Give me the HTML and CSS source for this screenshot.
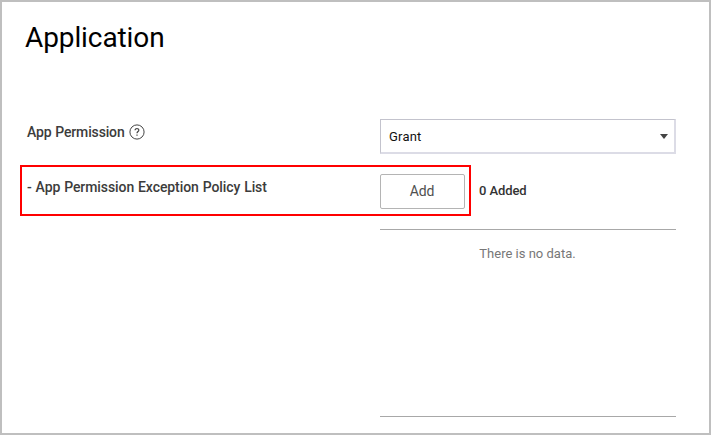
FILE: index.html
```
<!DOCTYPE html>
<html lang="en">
<head>
<meta charset="utf-8">
<title>Application</title>
<link rel="stylesheet" href="styles.css">
</head>
<body>
<main class="panel">
  <h1 class="title">Application</h1>
  <div class="row">
    <div class="label"><span class="name">App Permission</span>
      <svg class="help" viewBox="0 0 16 16" width="16" height="16" fill="none" stroke="#444"><circle cx="8" cy="8" r="7.1"/><path d="M6.1 6.2C6.1 3.9 9.9 4 9.8 6.2C9.7 7.6 8 7.5 8 9.3M8 10.5v1.3" stroke-width="1.2"/></svg>
    </div>
    <div class="select"><span>Grant</span><i class="caret"></i></div>
  </div>
  <div class="row exception">
    <div class="highlight">
      <div class="label">- App Permission Exception Policy List</div>
      <button class="add">Add</button>
    </div>
    <span class="count">0 Added</span>
  </div>
  <div class="list">There is no data.</div>
</main>
</body>
</html>
```
FILE: styles.css
```
* { box-sizing: border-box; }
body { margin: 0; font-family: Roboto, sans-serif; background: #fff; }
.panel { width: 711px; height: 435px; border: 2px solid #bfbfbf; }
.title { margin: 17px 0 0 23px; height: 36px; font-size: 28px; line-height: 37px; font-weight: 400; color: #000; letter-spacing: -.1px; }
.row { display: flex; }
.title + .row { margin-top: 64px; padding-left: 25px; height: 35px; }
.label { width: 353px; font-size: 14px; font-weight: 500; line-height: 26px; color: #3c3c3c; display: flex; align-items: center; gap: 4px; height: 26px; letter-spacing: -.08px; word-spacing: .5px; }
.name { letter-spacing: -.15px; }
.select { width: 296px; height: 35px; border: 1px solid #c3c3cd; border-right: 2px solid #dcdce6; border-bottom: 2px solid #dcdce6; display: flex; align-items: center; justify-content: space-between; padding: 0 6px 0 8px; font-size: 13px; letter-spacing: .2px; color: #111; }
.caret { border: 4px solid transparent; border-top: 5px solid #444; border-bottom: 0; }
.exception { margin: 11px 0 0 18px; height: 51px; }
.highlight { width: 451px; height: 51px; border: 2px solid #f00; display: flex; padding: 7px 4px 0 5px; }
.exception .label { width: 353px; flex: none; }
.add { width: 85px; height: 35px; border: 1px solid #b4b4b4; border-radius: 2px; background: #fff; font: 400 14px Roboto, sans-serif; color: #505050; letter-spacing: -.1px; padding: 0 1px 2px 0; }
.count { margin-left: 8px; line-height: 51px; font-size: 13px; font-weight: 500; color: #333; letter-spacing: -.1px; }
.list { margin: 13px 0 0 378px; width: 296px; height: 188px; border: solid #a8a8a8; border-width: 1px 0; padding: 15px 1px 0 0; text-align: center; font-size: 13px; line-height: 18px; color: #777; }
```
